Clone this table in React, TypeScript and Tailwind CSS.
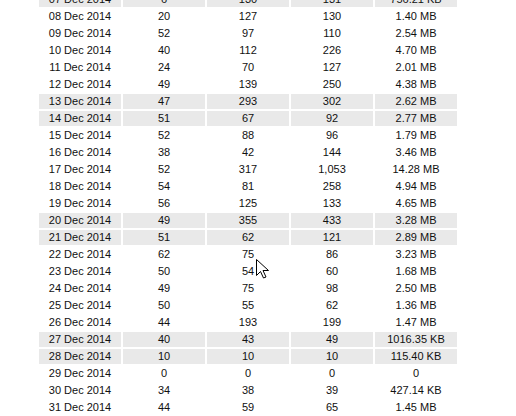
const rows: [string, string, string, string, string, boolean][] = [
  ["07 Dec 2014", "6", "130", "131", "756.21 KB", true],
  ["08 Dec 2014", "20", "127", "130", "1.40 MB", false],
  ["09 Dec 2014", "52", "97", "110", "2.54 MB", false],
  ["10 Dec 2014", "40", "112", "226", "4.70 MB", false],
  ["11 Dec 2014", "24", "70", "127", "2.01 MB", false],
  ["12 Dec 2014", "49", "139", "250", "4.38 MB", false],
  ["13 Dec 2014", "47", "293", "302", "2.62 MB", true],
  ["14 Dec 2014", "51", "67", "92", "2.77 MB", true],
  ["15 Dec 2014", "52", "88", "96", "1.79 MB", false],
  ["16 Dec 2014", "38", "42", "144", "3.46 MB", false],
  ["17 Dec 2014", "52", "317", "1,053", "14.28 MB", false],
  ["18 Dec 2014", "54", "81", "258", "4.94 MB", false],
  ["19 Dec 2014", "56", "125", "133", "4.65 MB", false],
  ["20 Dec 2014", "49", "355", "433", "3.28 MB", true],
  ["21 Dec 2014", "51", "62", "121", "2.89 MB", true],
  ["22 Dec 2014", "62", "75", "86", "3.23 MB", false],
  ["23 Dec 2014", "50", "54", "60", "1.68 MB", false],
  ["24 Dec 2014", "49", "75", "98", "2.50 MB", false],
  ["25 Dec 2014", "50", "55", "62", "1.36 MB", false],
  ["26 Dec 2014", "44", "193", "199", "1.47 MB", false],
  ["27 Dec 2014", "40", "43", "49", "1016.35 KB", true],
  ["28 Dec 2014", "10", "10", "10", "115.40 KB", true],
  ["29 Dec 2014", "0", "0", "0", "0", false],
  ["30 Dec 2014", "34", "38", "39", "427.14 KB", false],
  ["31 Dec 2014", "44", "59", "65", "1.45 MB", false],
];

function Cursor() {
  return (
    <svg
      className="absolute left-[256px] top-[259px]"
      width="13"
      height="20"
      viewBox="0 0 13 20"
    >
      <path
        d="M0.5 0.5 L0.5 16.5 L4.5 12.5 L7.5 19 L10 18 L7 11.5 L12.5 11.5 Z"
        fill="#fff"
        stroke="#000"
        strokeWidth="1"
        strokeLinejoin="miter"
      />
    </svg>
  );
}

export default function App() {
  return (
    <div className="relative w-[516px] h-[416px] overflow-hidden bg-white font-['Liberation_Sans',Arial,sans-serif] text-[11px] text-[#111]">
      <table className="ml-[37px] -mt-[10px] border-separate border-spacing-[2px]">
        <tbody>
          {rows.map((r) => (
            <tr key={r[0]} className={r[5] ? "bg-[#e9e9e9]" : ""}>
              {r.slice(0, 5).map((v, i) => (
                <td key={i} className="w-[82px] h-[15px] p-0 text-center leading-[15px]">
                  {v as string}
                </td>
              ))}
            </tr>
          ))}
        </tbody>
      </table>
      <Cursor />
    </div>
  );
}
